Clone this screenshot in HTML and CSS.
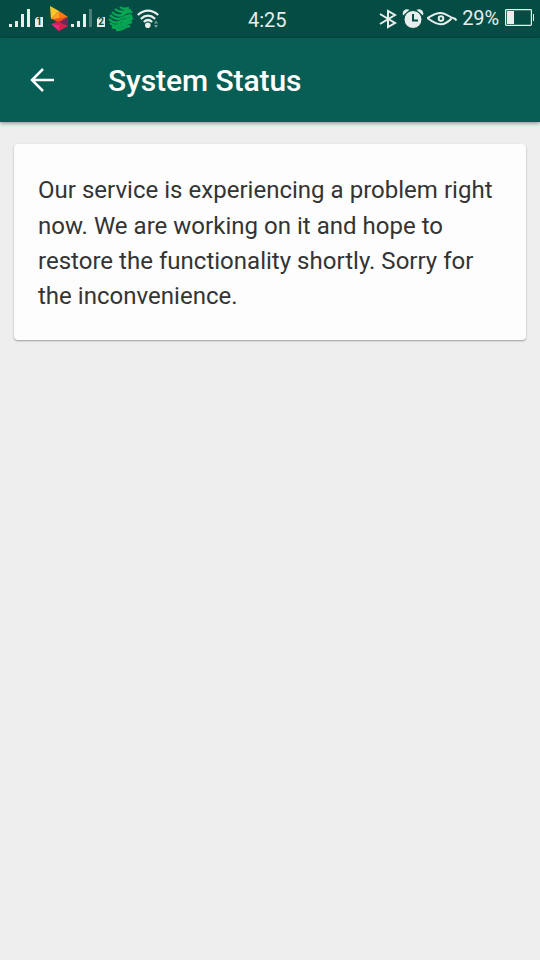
FILE: index.html
```html
<!DOCTYPE html>
<html lang="en">
<head>
    <meta charset="UTF-8">
    <meta name="viewport" content="width=device-width, initial-scale=1.0">
    <title>System Status</title>
    <link rel="stylesheet" href="styles.css">
</head>
<body>
    <div class="status-bar">
        <div class="status-left">
            <svg class="signal" width="22" height="18" viewBox="0 0 22 18">
                <path d="M0 15h3v3H0zM6 12h3v6H6zM12 5h3v13h-3zM18 0h3v18h-3z"/>
            </svg>
            <span class="sim sim-one">1</span>
            <svg class="carrier" width="19" height="25" viewBox="0 0 19 25">
                <path fill="#ffc52b" d="M0 0l9 5L1 13z"/>
                <path fill="#ffa51f" d="M9 5v8H1z"/>
                <path fill="#ff7a13" d="M9 5l9 6-9 2z"/>
                <path fill="#f2501f" d="M2 13l16-2-9 6z"/>
                <path fill="#d5175c" d="M1 18l8-3v5z"/>
                <path fill="#ef2a7c" d="M1 18l8 1v6z"/>
                <path fill="#70265f" d="M18 11v9l-9-4z"/>
                <path fill="#d91f4f" d="M9 16l9 4-9 5z"/>
            </svg>
            <svg class="signal signal-two" width="22" height="18" viewBox="0 0 22 18">
                <path d="M0 15h3v3H0zM6 12h3v6H6zM12 5h3v13h-3z"/>
                <path opacity=".3" d="M18 0h3v18h-3z"/>
            </svg>
            <span class="sim sim-two">2</span>
            <svg class="globe" width="26" height="26" viewBox="0 0 26 26">
                <g fill="none" stroke="#07a653" stroke-width="2.400">
                    <path d="M12 1q3 3 9 1"/>
                    <path d="M7 3q5 5 16 1"/>
                    <path d="M4 6q6 6 12 2t8-1"/>
                    <path d="M2 9q6 6 12 3t10-2"/>
                    <path d="M1 13q5 5 10 3t7-2 6-4"/>
                    <path d="M2 17q4 4 9 2t7-3 7-4"/>
                    <path d="M4 21q6 2 10-1t10-4"/>
                    <path d="M8 24q5 0 8-2t6-2"/>
                    <path stroke-width="1.800" d="M18 4l-5 6M22 8l-7 9M13 14l-5 8M21 15l-6 8"/>
                </g>
            </svg>
            <svg class="wifi" width="24" height="20" viewBox="0 0 24 20">
                <g fill="none" stroke="#e7eeec" stroke-width="2.200">
                    <path d="M.8 6Q11 -2.7 21.2 6"/>
                    <path d="M3.8 9.800Q11 3.600 18.200 9.800"/>
                    <path d="M6.800 13Q11 9 15.200 13"/>
                </g>
                <circle cx="10.800" cy="16.200" r="2.800"/>
                <path opacity=".5" d="M17 14.500l2-3 2 3zM17 16h4l-2 3z"/>
            </svg>
        </div>
        <div class="clock">4:25</div>
        <div class="status-right">
            <svg class="bluetooth" width="18" height="20" viewBox="0 0 18 20">
                <path fill="none" stroke="#e7eeec" stroke-width="2" d="M1 5l15 9-7 4V2l7 4L1 15"/>
            </svg>
            <svg class="alarm" width="22" height="20" viewBox="0 0 22 20">
                <path d="M1 6.500C-.500 2 3.500-1 7.500.800zM21 6.500C22.500 2 18.500-1 14.500.800z"/>
                <circle cx="11" cy="10.500" r="9" stroke="#054d44" stroke-width="1"/>
                <path fill="none" stroke="#054d44" stroke-width="2" d="M11 5v6.500h5"/>
            </svg>
            <svg class="eye" width="31" height="14" viewBox="0 0 31 14">
                <g fill="none" stroke="#e7eeec" stroke-width="2">
                    <path d="M0 6.500Q8 1 14 1C19 1 22 5 26 6Q28.500 6.500 29.500 8.500"/>
                    <path d="M1 6.500Q9 12.300 14 12.300Q19 12.300 24.500 6.500"/>
                    <circle cx="14" cy="6.600" r="2.300"/>
                </g>
            </svg>
            <span class="percent">29%</span>
            <svg class="battery" width="29" height="18" viewBox="0 0 29 18">
                <rect x=".600" y=".600" width="25.800" height="15.800" rx=".800" fill="none" stroke="#e7eeec" stroke-width="1.200"/>
                <path d="M2 2h7v13H2zM28 5h1v7h-1z"/>
            </svg>
        </div>
    </div>

    <header class="toolbar">
        <svg class="back" width="24" height="24" viewBox="0 0 24 24">
            <path fill="none" stroke="#fff" stroke-width="2.500" d="M24 12H2M13 1L2 12l11 11"/>
        </svg>
        <h1>System Status</h1>
    </header>

    <main class="content">
        <div class="card">
            <p>Our service is experiencing a problem right now. We are working on it and hope to restore the functionality shortly. Sorry for the inconvenience.</p>
        </div>
    </main>
</body>
</html>
```

FILE: styles.css
```css
:root {
    --color-status: #054d44;
    --color-toolbar: #075e54;
    --color-icon: #e7eeec;
    --color-page: #eeeeee;
    --color-card: #fdfdfd;
    --color-text: #343434;
}

* {
    margin: 0;
    padding: 0;
    box-sizing: border-box;
}

body {
    min-height: 100vh;
    background-color: var(--color-page);
    font-family: Roboto, sans-serif;
    color: var(--color-text);
}

svg {
    display: block;
    flex: none;
    fill: var(--color-icon);
}

/* Status bar */
.status-bar {
    display: flex;
    height: 38px;
    padding: 0 6px 0 9px;
    background-color: var(--color-status);
    color: var(--color-icon);
}

.status-left,
.status-right {
    display: flex;
    align-items: flex-start;
}

.status-left {
    width: 239px;
}

.status-right {
    flex: 1;
    justify-content: flex-end;
}

.signal {
    margin-top: 9px;
}

.sim {
    width: 8px;
    height: 10px;
    margin-top: 17px;
    background-color: var(--color-icon);
    color: var(--color-status);
    font-size: 10px;
    font-weight: 700;
    line-height: 10px;
    text-align: center;
    clip-path: polygon(2px 0, 100% 0, 100% 100%, 0 100%, 0 2px);
}

.sim-one {
    margin-left: 4px;
}

.carrier {
    margin: 6px 0 0 7px;
}

.signal-two {
    margin-left: 2px;
}

.sim-two {
    margin-left: 4px;
}

.globe {
    margin: 6px 0 0 3px;
}

.wifi {
    margin: 9px 0 0 3px;
}

.clock {
    font-size: 20px;
    line-height: 40px;
}

.bluetooth {
    margin-top: 9px;
}

.alarm {
    margin: 9px 0 0 5px;
}

.eye {
    margin: 12px 0 0 3px;
}

.percent {
    margin-left: 4px;
    font-size: 20px;
    letter-spacing: -0.1px;
    line-height: 37px;
}

.battery {
    margin: 9px 0 0 6px;
}

/* Toolbar */
.toolbar {
    display: flex;
    align-items: center;
    height: 84px;
    padding-left: 30px;
    background-color: var(--color-toolbar);
    box-shadow: 0 1px 4px rgba(0, 0, 0, 0.45);
}

.toolbar h1 {
    margin-left: 54px;
    padding-top: 2px;
    color: #fff;
    font-size: 30px;
    font-weight: 500;
    letter-spacing: -0.07px;
    line-height: 36px;
}

/* Message */
.content {
    padding: 22px 14px;
}

.card {
    height: 196px;
    padding: 29.4px 24px 0;
    background-color: var(--color-card);
    border-radius: 4px;
    box-shadow: 0 1px 2px rgba(0, 0, 0, 0.35);
}

.card p {
    font-size: 24px;
    letter-spacing: 0.02px;
    line-height: 35.3px;
}
```
